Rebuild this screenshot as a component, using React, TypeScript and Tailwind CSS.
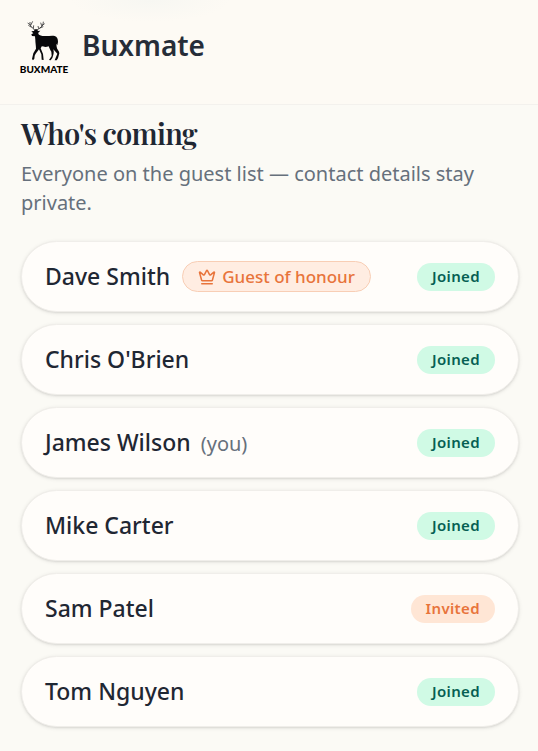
import { Crown } from "lucide-react";

type Status = "Joined" | "Invited";

interface Guest {
  name: string;
  status: Status;
  honour?: boolean;
  you?: boolean;
}

const guests: Guest[] = [
  { name: "Dave Smith", status: "Joined", honour: true },
  { name: "Chris O'Brien", status: "Joined" },
  { name: "James Wilson", status: "Joined", you: true },
  { name: "Mike Carter", status: "Joined" },
  { name: "Sam Patel", status: "Invited" },
  { name: "Tom Nguyen", status: "Joined" },
];

const statusStyles: Record<Status, string> = {
  Joined: "bg-[#d0fae5] text-[#065f53]",
  Invited: "bg-[#ffe6d5] text-[#e8743b]",
};

function Logo() {
  return (
    <div className="flex w-12 shrink-0 flex-col items-center">
      <svg viewBox="0 0 120 144" className="h-12 w-10" aria-hidden="true">
        <path
          d="M28 49 L22 43 L30 42 L32 37 L39 37 L42 42 L49 41 L43 47 L43 51 C47 56 53 57 61 57 C71 58 83 55 92 57 C99 58 102 66 102 75 L100 85 L97 80 L98 89 C98 96 106 101 106 109 L102 124 L98 130 L92 130 L100 110 L88 97 C91 106 88 115 85 123 L80 130 L75 129 L83 117 L82 104 C78 98 76 93 74 88 C66 91 58 90 54 87 L50 94 L57 111 L59 129 L53 128 L52 112 L45 97 C40 104 35 109 32 116 L31 125 L27 130 L24 126 L28 109 L36 95 C36 86 34 77 34 69 L33 58 L24 57 L22 52 Z"
          fill="#08080a"
        />
        <path
          d="M32 39 C26 32 17 29 18 15 M23 31 L13 25 M20 25 L26 13 M18 23 L11 18 M28 35 L29 25 M38 39 C48 34 58 28 58 14 M47 33 L58 29 M53 26 L62 20 M53 26 L50 17 M44 35 L42 27"
          fill="none"
          stroke="#08080a"
          strokeWidth="2"
        />
      </svg>
      <span className="font-['Lato'] text-[10px] leading-[9px] font-black text-black">BUXMATE</span>
    </div>
  );
}

function GuestRow({ guest }: { guest: Guest }) {
  return (
    <li className="flex h-[71px] items-center justify-between rounded-full border border-[#f0eeea] bg-[#fffdfa] px-[23px] shadow-[0_1px_4px_rgba(0,0,0,0.1),0_1px_2px_rgba(0,0,0,0.07)]">
      <div className="flex items-center gap-3">
        <p className="text-[23px] font-medium text-[#1f2733]">
          {guest.name}
          {guest.you && <span className="ml-[10px] text-xl font-normal text-[#66707c]">(you)</span>}
        </p>
        {guest.honour && (
          <span className="flex h-[31px] items-center gap-[6px] rounded-full border border-[#f8ceb5] bg-[#ffede2] px-[15px] text-[17px] font-medium text-[#e8743b]">
            <Crown size={18} strokeWidth={2} aria-hidden="true" />
            Guest of honour
          </span>
        )}
      </div>
      <span
        className={`flex h-7 items-center rounded-full px-[15px] text-[15px] font-semibold tracking-wide ${statusStyles[guest.status]}`}
      >
        {guest.status}
      </span>
    </li>
  );
}

export default function App() {
  return (
    <div className="min-h-screen bg-[#fbfaf5] font-['Noto_Sans',sans-serif]">
      <header className="flex h-[105px] items-center gap-[14px] border-b border-[#f3f1ed] bg-[#fdfaf4] bg-[radial-gradient(ellipse_80px_22px_at_150px_0px,#f7f7f2,transparent)] px-5 pb-[14px]">
        <Logo />
        <span className="text-[28px] font-semibold text-[#262d38]">Buxmate</span>
      </header>
      <main className="pt-2 pr-[19px] pb-5 pl-[21px]">
        <h1 className="font-['Playfair_Display','Liberation_Serif',serif] text-[29px] leading-10 font-semibold tracking-tight text-[#1f2733]">
          Who's coming
        </h1>
        <p className="mt-[6px] text-xl leading-[29px] text-[#66707c]">
          Everyone on the guest list — contact details stay private.
        </p>
        <ul className="mt-6 flex flex-col gap-3">
          {guests.map((guest) => (
            <GuestRow key={guest.name} guest={guest} />
          ))}
        </ul>
      </main>
    </div>
  );
}
